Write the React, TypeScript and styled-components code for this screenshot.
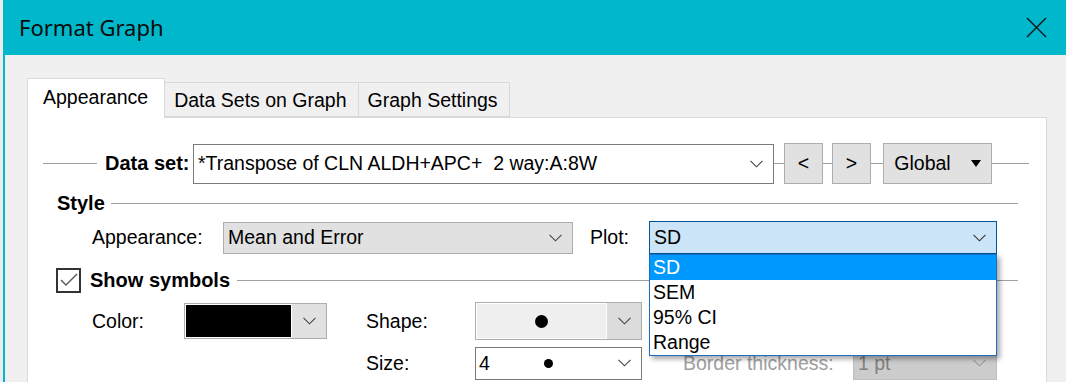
import React from "react";
import styled, { createGlobalStyle } from "styled-components";

const Global = createGlobalStyle`
  html, body { margin: 0; padding: 0; background: #e9e9e9; }
  body { font-family: "Liberation Sans", Arial, sans-serif; }
  * { box-sizing: border-box; }
`;

const Screen = styled.div`
  display: flex;
  width: 1066px;
  height: 382px;
  overflow: hidden;
`;

const Backdrop = styled.div`
  width: 3px;
  flex: none;
  background: #ececec;
`;

const Window = styled.div`
  flex: 1;
  display: flex;
  flex-direction: column;
  border-left: 2px solid #00b7cb;
  min-width: 0;
`;

const TitleBar = styled.div`
  height: 55px;
  flex: none;
  background: #00b7cb;
  display: flex;
  align-items: center;
  justify-content: space-between;
  padding: 0 19px 0 14px;
`;

const Title = styled.div`
  font-family: "Noto Sans", "Open Sans", sans-serif;
  font-size: 22px;
  color: #0a0a0a;
  margin-top: -1px;
`;

const Body = styled.div`
  flex: 1;
  background: #f0f0f0;
  padding: 23px 19px 0 22px;
  display: flex;
  flex-direction: column;
  font-size: 19.5px;
  color: #000;
`;

const TabRow = styled.div`
  display: flex;
  align-items: flex-end;
  height: 39px;
  flex: none;
  position: relative;
  z-index: 1;
`;

const Tab = styled.div<{ $active?: boolean }>`
  height: ${(p) => (p.$active ? "40px" : "35px")};
  margin-bottom: ${(p) => (p.$active ? "-1px" : "0")};
  padding: ${(p) => (p.$active ? "0 16px 3px 15px" : "2px 11px 0 9px")};
  background: ${(p) => (p.$active ? "#fff" : "#f0f0f0")};
  border: 1px solid #d9d9d9;
  border-bottom: ${(p) => (p.$active ? "none" : "1px solid #d9d9d9")};
  border-left: ${(p) => (p.$active ? "1px solid #d9d9d9" : "none")};
  display: flex;
  align-items: center;
  white-space: nowrap;
`;

const Panel = styled.div`
  flex: 1;
  background: #fff;
  border: 1px solid #d9d9d9;
  border-bottom: none;
  display: flex;
  flex-direction: column;
  position: relative;
`;

const Rule = styled.div<{ $w?: number }>`
  height: 1px;
  background: #a0a0a0;
  ${(p) => (p.$w ? `width: ${p.$w}px; flex: none;` : "flex: 1;")}
`;

const DataRow = styled.div`
  display: flex;
  align-items: center;
  height: 41px;
  margin-top: 25px;
  padding: 0 17px 0 15px;
`;

const BoldLabel = styled.span<{ $w?: number }>`
  font-weight: bold;
  font-size: 20px;
  white-space: nowrap;
  ${(p) => (p.$w ? `width: ${p.$w}px; flex: none;` : "")}
`;

const Combo = styled.div<{ $w: number; $h: number; $bg?: string; $border?: string; $color?: string }>`
  width: ${(p) => p.$w}px;
  height: ${(p) => p.$h}px;
  flex: none;
  background: ${(p) => p.$bg ?? "#fff"};
  border: 1px solid ${(p) => p.$border ?? "#7a7a7a"};
  color: ${(p) => p.$color ?? "#000"};
  display: flex;
  align-items: center;
  padding: 0 10px 0 4px;
  white-space: nowrap;
  position: relative;
`;

const ComboText = styled.span`
  flex: 1;
  overflow: hidden;
`;

const GrayButton = styled.div<{ $w: number }>`
  width: ${(p) => p.$w}px;
  height: 41px;
  flex: none;
  background: #e1e1e1;
  border: 1px solid #adadad;
  display: flex;
  align-items: center;
  justify-content: center;
  gap: 20px;
`;

const SectionRow = styled.div<{ $top: number; $left: number; $h: number }>`
  display: flex;
  align-items: center;
  height: ${(p) => p.$h}px;
  margin-top: ${(p) => p.$top}px;
  padding: 0 28px 0 ${(p) => p.$left}px;
`;

const Label = styled.span<{ $w?: number; $pl?: number; $muted?: boolean }>`
  white-space: nowrap;
  color: ${(p) => (p.$muted ? "#a0a0a0" : "#000")};
  padding-left: ${(p) => p.$pl ?? 0}px;
  ${(p) => (p.$w ? `width: ${p.$w}px; flex: none;` : "")}
`;

const PlotWrap = styled.div`
  position: relative;
  flex: none;
`;

const DropList = styled.div`
  position: absolute;
  top: 100%;
  left: 0;
  right: 0;
  background: #fff;
  border: 1px solid #1a6dc0;
  box-shadow: 3px 3px 5px rgba(0, 0, 0, 0.35);
  z-index: 5;
`;

const DropItem = styled.div<{ $sel?: boolean }>`
  height: 25px;
  padding-left: 3px;
  display: flex;
  align-items: center;
  background: ${(p) => (p.$sel ? "#0099ff" : "transparent")};
  color: ${(p) => (p.$sel ? "#fff" : "#000")};
`;

const CheckBox = styled.div`
  width: 25px;
  height: 25px;
  flex: none;
  border: 2px solid #333;
  display: flex;
  align-items: center;
  justify-content: center;
  margin-right: 9px;
`;

const Grid = styled.div`
  display: grid;
  grid-template-columns: 92px 143px 39px 109px 167px 41px 170px 144px;
  grid-template-rows: 38px 34px;
  row-gap: 6px;
  align-items: center;
  margin-top: 9px;
  padding-left: 64px;
`;

const Swatch = styled.div`
  height: 36px;
  display: flex;
  border: 1px solid #adadad;
`;

const SwatchColor = styled.div`
  flex: 1;
  background: #000;
  border: 1px solid #fff;
`;

const SideButton = styled.div<{ $bg: string }>`
  width: 34px;
  flex: none;
  background: ${(p) => p.$bg};
  display: flex;
  align-items: center;
  justify-content: center;
`;

const ShapeBox = styled.div`
  height: 38px;
  display: flex;
  border: 1px solid #adadad;
`;

const ShapeFace = styled.div`
  flex: 1;
  background: #efefef;
  border: 1px solid #fff;
  display: flex;
  align-items: center;
  justify-content: center;
`;

const Dot = styled.div<{ $d: number }>`
  width: ${(p) => p.$d}px;
  height: ${(p) => p.$d}px;
  border-radius: 50%;
  background: #000;
  flex: none;
`;

const SizeBox = styled.div`
  height: 33px;
  border: 1px solid #7a7a7a;
  background: #fff;
  display: flex;
  align-items: center;
  padding: 0 10px 0 3px;
`;

const SizeDot = styled.div`
  flex: 1;
  display: flex;
  justify-content: center;
  padding-right: 10px;
`;

const Spacer = styled.span<{ $w: number }>`
  width: ${(p) => p.$w}px;
  flex: none;
`;

const Chevron = ({ color = "#444" }: { color?: string }) => (
  <svg width="13" height="8" viewBox="0 0 13 8" style={{ flex: "none" }}>
    <polyline points="0.5,0.8 6.5,6.8 12.5,0.8" fill="none" stroke={color} strokeWidth="1.1" />
  </svg>
);

export default function App() {
  return (
    <>
      <Global />
      <Screen>
        <Backdrop />
        <Window>
          <TitleBar>
            <Title>Format Graph</Title>
            <svg width="21" height="21" viewBox="0 0 21 21">
              <path d="M1 1 L20 20 M20 1 L1 20" stroke="#111" strokeWidth="1.3" />
            </svg>
          </TitleBar>
          <Body>
            <TabRow>
              <Tab $active>Appearance</Tab>
              <Tab>Data Sets on Graph</Tab>
              <Tab>Graph Settings</Tab>
            </TabRow>
            <Panel>
              <DataRow>
                <Rule $w={54} />
                <Spacer $w={8} />
                <BoldLabel $w={88}>Data set:</BoldLabel>
                <Combo $w={581} $h={40}>
                  <ComboText>*Transpose of CLN ALDH+APC+&nbsp; 2 way:A:8W</ComboText>
                  <Chevron />
                </Combo>
                <Rule $w={10} />
                <GrayButton $w={39}>&lt;</GrayButton>
                <Rule $w={9} />
                <GrayButton $w={39}>&gt;</GrayButton>
                <Rule $w={12} />
                <GrayButton $w={109}>
                  <span>Global</span>
                  <svg width="10" height="7" viewBox="0 0 10 7">
                    <polygon points="0,0 10,0 5,7" fill="#000" />
                  </svg>
                </GrayButton>
                <Rule />
              </DataRow>

              <SectionRow $top={8} $left={29} $h={22}>
                <BoldLabel>Style</BoldLabel>
                <Spacer $w={6} />
                <Rule />
              </SectionRow>

              <SectionRow $top={7} $left={64} $h={33}>
                <Label $w={131}>Appearance:</Label>
                <Combo $w={350} $h={32} $bg="#e1e1e1" $border="#adadad">
                  <ComboText>Mean and Error</ComboText>
                  <Chevron />
                </Combo>
                <Label $w={76} $pl={17}>Plot:</Label>
                <PlotWrap>
                  <Combo $w={348} $h={33} $bg="#cce4f7" $border="#005499">
                    <ComboText>SD</ComboText>
                    <Chevron color="#333" />
                  </Combo>
                  <DropList>
                    <DropItem $sel>SD</DropItem>
                    <DropItem>SEM</DropItem>
                    <DropItem>95% CI</DropItem>
                    <DropItem>Range</DropItem>
                  </DropList>
                </PlotWrap>
              </SectionRow>

              <SectionRow $top={13} $left={28} $h={26}>
                <CheckBox>
                  <svg width="18" height="14" viewBox="0 0 18 14">
                    <polyline points="1,7 6,12 17,1" fill="none" stroke="#555" strokeWidth="1.4" />
                  </svg>
                </CheckBox>
                <BoldLabel>Show symbols</BoldLabel>
                <Spacer $w={7} />
                <Rule />
              </SectionRow>

              <Grid>
                <Label>Color:</Label>
                <Swatch>
                  <SwatchColor />
                  <SideButton $bg="#e1e1e1">
                    <Chevron />
                  </SideButton>
                </Swatch>
                <span />
                <Label>Shape:</Label>
                <ShapeBox>
                  <ShapeFace>
                    <Dot $d={13} />
                  </ShapeFace>
                  <SideButton $bg="#dcdcdc">
                    <Chevron />
                  </SideButton>
                </ShapeBox>
                <span />
                <span />
                <span />

                <span />
                <span />
                <span />
                <Label>Size:</Label>
                <SizeBox>
                  <span>4</span>
                  <SizeDot>
                    <Dot $d={9} />
                  </SizeDot>
                  <Chevron />
                </SizeBox>
                <span />
                <Label $muted>Border thickness:</Label>
                <Combo $w={144} $h={34} $bg="#cccccc" $border="#bfbfbf" $color="#808080">
                  <ComboText>1 pt</ComboText>
                  <Chevron color="#9a9a9a" />
                </Combo>
              </Grid>
            </Panel>
          </Body>
        </Window>
      </Screen>
    </>
  );
}
